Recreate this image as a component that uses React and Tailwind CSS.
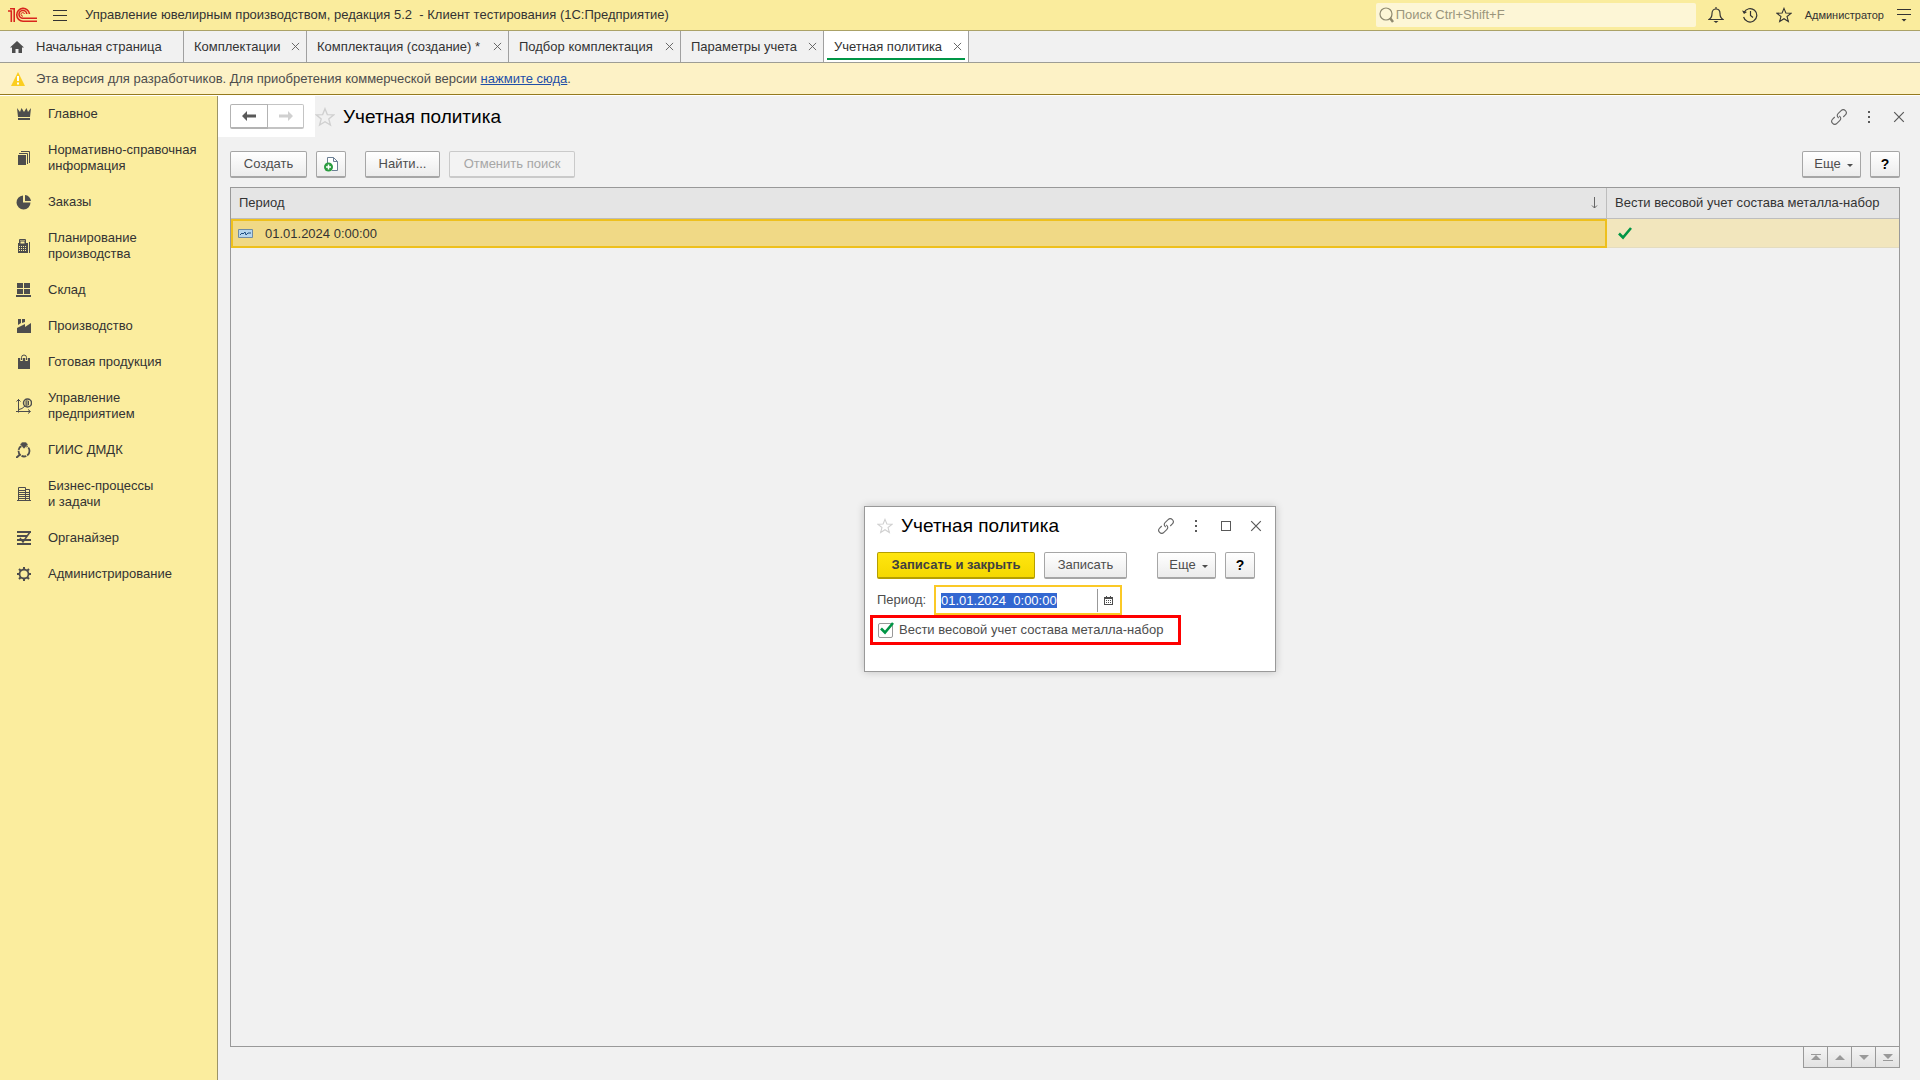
import { useEffect, useRef, useState } from 'react';

const tabs = [
    { title: 'Комплектации', width: 'min-w-[123px]' },
    { title: 'Комплектация (создание) *', width: 'min-w-[202px]' },
    { title: 'Подбор комплектация', width: 'min-w-[172px]' },
    { title: 'Параметры учета', width: 'min-w-[143px]' },
    { title: 'Учетная политика', width: 'min-w-[145px]', active: true },
];

const sections = [
    { title: 'Главное', icon: 'crown' },
    { title: 'Нормативно-справочная информация', icon: 'books' },
    { title: 'Заказы', icon: 'pie' },
    { title: 'Планирование производства', icon: 'calc' },
    { title: 'Склад', icon: 'boxes' },
    { title: 'Производство', icon: 'factory' },
    { title: 'Готовая продукция', icon: 'bag' },
    { title: 'Управление предприятием', icon: 'graph' },
    { title: 'ГИИС ДМДК', icon: 'ring' },
    { title: 'Бизнес-процессы и\u00a0задачи', icon: 'building' },
    { title: 'Органайзер', icon: 'organizer' },
    { title: 'Администрирование', icon: 'gear' },
];

const sectionIcons = {
    crown: (
        <g fill="currentColor">
            <path d="M1 2l3 4 1.500-4L8 6l2.500-4L12 6l3-4-1 9H2z" />
            <path d="M2 12h12v2H2z" />
        </g>
    ),
    books: (
        <g>
            <path d="M2 5h8v10H2z" fill="currentColor" />
            <path d="M3 3.500h8.500V14M5 1.500h8.500V13" fill="none" stroke="currentColor" />
        </g>
    ),
    pie: (
        <g fill="currentColor">
            <path d="M7 1.500V8.500H14.500A7 7 0 1 1 7 1.500z" />
            <path d="M9 1a6.500 6.500 0 0 1 6 6H9z" />
        </g>
    ),
    calc: (
        <g>
            <path d="M2 5h10v10H2z" fill="currentColor" />
            <path d="M3.500 5V1.500h6V5M13.500 4v11" fill="none" stroke="currentColor" />
            <path d="M4 3h5v3H4z" fill="#fbed9e" stroke="currentColor" />
            <path d="M3 8.500h8M3 10.500h8M3 12.500h8" stroke="#fbed9e" strokeDasharray="1 1" />
        </g>
    ),
    boxes: <path d="M1 1h6v5H1zM8 1h6v5H8zM1 7h6v5H1zM8 7h6v5H8zM0 13h15v2H0z" fill="currentColor" />,
    factory: <path d="M1 15V10l8-4v3l6-4v10zM2 1h3v4l-3 2zM6 1h3v3L6 5z" fill="currentColor" />,
    bag: (
        <g>
            <path d="M2 4h12v11H2z" fill="currentColor" />
            <path d="M5.500 7V3.500a2.500 2.500 0 0 1 5 0V7" fill="none" stroke="#fbed9e" strokeWidth="2.500" />
            <path d="M5.500 6V3.500a2.500 2.500 0 0 1 5 0V6" fill="none" stroke="currentColor" />
        </g>
    ),
    graph: (
        <g fill="none" stroke="currentColor">
            <path d="M2.500 1v13.500M0 13.500h14M.5 3.500l2-2 2 2M12 11.500l2.500 2-2.500 2M3 11.500l3-1 3-2.500" />
            <circle cx="11.500" cy="5" r="4" strokeWidth="1.500" />
            <path d="M10 3h2.500v2H10M12.500 5v2H10M10 2.500V8" />
        </g>
    ),
    ring: (
        <g fill="none" stroke="currentColor">
            <circle cx="8" cy="9" r="5.500" strokeWidth="1.800" strokeDasharray="5 1" />
            <path d="M4 12.500L0 16" strokeWidth="2" />
            <path d="M6 0h4l2 2.500L8 7 4 2.500z" fill="currentColor" stroke="#fbed9e" strokeWidth=".6" />
        </g>
    ),
    building: (
        <g fill="none" stroke="currentColor">
            <path d="M2.500 15V1.500h7V15M10 3.500h3.500V15M1 14.500h14" />
            <path d="M3 4.500h6M3 6.500h10M3 8.500h10M3 10.500h10M3 12.500h10" />
        </g>
    ),
    organizer: (
        <g fill="none" stroke="currentColor" strokeWidth="2">
            <path d="M1 2h14M1 6h10M1 10h14M1 14h14" />
            <path d="M4 8l3 4 7-10" strokeWidth="1.500" />
        </g>
    ),
    gear: (
        <g fill="none" stroke="currentColor">
            <circle cx="8" cy="8" r="4.500" strokeWidth="1.800" />
            <path
                d="M8 1v2.500M8 12.500V15M1 8h2.500M12.500 8H15M3 3l2 2M11 11l2 2M3 13l2-2M11 5l2-2"
                strokeWidth="2"
            />
        </g>
    ),
};

const buttonLook = 'h-[27px] rounded-[2px] border border-b-2 border-[#a6a6a6] bg-linear-to-b from-white to-[#ececec] text-[#4d4d4d]';

function Logo() {
    return (
        <svg width="30" height="16" viewBox="0 0 30 16" fill="none" stroke="#d9251d" strokeWidth="1.600" aria-label="1С">
            <path d="M0 4h3.300V15M2 1.800h4.200V15" />
            <path d="M21.500 7A6.400 6.400 0 1 0 15 14.200H29" />
            <path d="M18.800 7A3.900 3.900 0 1 0 15 11.300H29" />
            <path d="M16.500 7a1.800 1.800 0 1 0-1.500 2.200" strokeWidth="1" />
        </svg>
    );
}

function Cross({ size }) {
    return (
        <svg width={size} height={size} viewBox="0 0 10 10" stroke="#595959" strokeWidth="1" fill="none">
            <path d="M1 1l8 8M9 1l-8 8" />
        </svg>
    );
}

function Star({ size, color }) {
    return (
        <svg width={size} height={size} viewBox="0 0 18 18" fill="none" stroke={color} strokeWidth="1.200">
            <path d="M9 1.500l2.100 5.300 5.700.3-4.400 3.600 1.500 5.600L9 13.200l-4.900 3.100 1.500-5.600L1.200 7.100l5.700-.3z" />
        </svg>
    );
}

function LinkIcon() {
    return (
        <svg width="16" height="16" viewBox="0 0 16 16" fill="none" stroke="#666" strokeWidth="1.100">
            <g transform="rotate(-45 8 8)">
                <path d="M7 8.500V8a3 3 0 0 1 3-3h4a3 3 0 0 1 0 6h-3" />
                <path d="M9 7.500V8a3 3 0 0 1-3 3H2a3 3 0 0 1 0-6h3" />
            </g>
        </svg>
    );
}

function Dots() {
    return (
        <svg width="4" height="12" viewBox="0 0 4 12" fill="#595959">
            <path d="M1 0h2v2H1zM1 5h2v2H1zM1 10h2v2H1z" />
        </svg>
    );
}

function CheckMark({ className }) {
    return (
        <svg width="14" height="13" viewBox="0 0 14 13" fill="none" stroke="#009646" strokeWidth="2.600" className={className}>
            <path d="M1 6.500l4 4L13 1" />
        </svg>
    );
}

function WindowButton({ label, children }) {
    return (
        <button aria-label={label} className="flex h-6 w-[30px] items-center justify-center">
            {children}
        </button>
    );
}

function MoreButton() {
    return (
        <button className={`${buttonLook} flex w-[59px] items-center justify-center gap-[6px] pl-1`}>
            Еще
            <svg width="6" height="4" viewBox="0 0 6 4" fill="#4d4d4d" className="mt-1">
                <path d="M0 0h6L3 3z" />
            </svg>
        </button>
    );
}

function HelpButton() {
    return <button className={`${buttonLook} w-[30px] text-sm font-bold text-black`}>?</button>;
}

function TopBar() {
    return (
        <header className="flex h-[31px] items-center border-b border-[#aba267] bg-[#faec9d] pl-2 pr-[9px]">
            <Logo />
            <button className="ml-[15px]" aria-label="Меню">
                <svg width="14" height="11" viewBox="0 0 14 11" stroke="#333">
                    <path d="M0 .5h14M0 5.500h14M0 10.500h14" />
                </svg>
            </button>
            <h1 className="ml-[18px] flex-1 whitespace-pre">
                Управление ювелирным производством, редакция 5.2  - Клиент тестирования (1С:Предприятие)
            </h1>
            <label className="flex h-6 w-[320px] items-center gap-[2px] rounded-[2px] bg-[#fdf6d6] pl-[3px]">
                <svg width="15" height="16" viewBox="0 0 15 16" fill="none" stroke="#8f8a70" strokeWidth="1.200">
                    <circle cx="7" cy="7" r="6" />
                    <path d="M11 11l3 4" strokeWidth="2.500" />
                </svg>
                <input
                    type="search"
                    aria-label="Поиск"
                    placeholder="Поиск Ctrl+Shift+F"
                    className="h-6 min-w-0 flex-1 bg-transparent pb-[2px] outline-none placeholder:text-[#9a957c]"
                />
            </label>
            <div className="ml-[12px] flex items-center gap-[18px]">
                <button aria-label="Уведомления">
                    <svg width="16" height="16" viewBox="0 0 16 16" fill="none" stroke="#333" strokeWidth="1.200">
                        <path d="M1 12.500c2.500-1.500 3-3 3-6C4 3.500 5.800 2 8 2s4 1.500 4 4.500c0 3 .5 4.500 3 6zM8 0v2" />
                        <path d="M5.500 14h5L8 16z" fill="#333" stroke="none" />
                    </svg>
                </button>
                <button aria-label="История">
                    <svg width="16" height="16" viewBox="0 0 16 16" fill="none" stroke="#333" strokeWidth="1.200">
                        <path d="M2 5.500a6.700 6.700 0 1 1-.4 4.500M8.500 4v4.500l2.500 2" />
                        <path d="M0 3.500l2 3.500 3-2z" fill="#333" stroke="none" />
                    </svg>
                </button>
                <button aria-label="Избранное">
                    <Star size={16} color="#333" />
                </button>
            </div>
            <a href="#user" className="ml-[13px] text-[11px]">Администратор</a>
            <button className="ml-[13px]" aria-label="Сервис">
                <svg width="14" height="14" viewBox="0 0 14 14" stroke="#333">
                    <path d="M0 1.500h14M0 6.500h14" />
                    <path d="M4.500 11h5L7 13.500z" fill="#333" stroke="none" />
                </svg>
            </button>
        </header>
    );
}

function TabBar() {
    return (
        <nav className="flex h-8 border-b border-[#9d9d95] bg-[#f1f1f1]">
            <a href="#home" className="flex w-[184px] items-center gap-3 border-r border-[#a0a0a0] pl-[10px]">
                <svg width="14" height="12" viewBox="0 0 14 12" fill="#4d4d4d">
                    <path d="M7 0l7 6.500h-2V12H8.500V8h-3v4H2V6.500H0z" />
                </svg>
                Начальная страница
            </a>
            {tabs.map((tab) => (
                <div
                    key={tab.title}
                    className={`relative flex items-center justify-between border-r border-[#a0a0a0] pl-[10px] pr-[6px] ${tab.width} ${tab.active ? 'bg-white' : ''}`}
                >
                    <a href="#tab">{tab.title}</a>
                    <button aria-label="Закрыть">
                        <Cross size={9} />
                    </button>
                    {tab.active && <span className="absolute inset-x-[3px] bottom-[2px] h-[2px] bg-[#009646]" />}
                </div>
            ))}
        </nav>
    );
}

function Notice() {
    return (
        <div className="flex h-8 items-center gap-[11px] border-b border-[#957a1e] bg-[#fdf2c6] pl-[11px] text-[#4d4d4d]">
            <svg width="14" height="14" viewBox="0 0 14 14">
                <path d="M7 0l7 14H0z" fill="#fbce20" />
                <path d="M6 4h2v5H6zM6 10.500h2v2H6z" fill="#fff" />
            </svg>
            <p>
                Эта версия для разработчиков. Для приобретения коммерческой версии{' '}
                <a href="#buy" className="text-[#1f4fa8] underline">нажмите сюда</a>.
            </p>
        </div>
    );
}

function Sidebar() {
    return (
        <nav className="w-[218px] shrink-0 border-r border-[#9c9466] bg-[#fbed9e]">
            {sections.map((section) => (
                <a key={section.title} href="#section" className="flex items-center gap-4 py-[10px] pl-4 pr-2 leading-4">
                    <svg width="16" height="16" viewBox="0 0 16 16" className="shrink-0 text-[#4d4d4d]">
                        {sectionIcons[section.icon]}
                    </svg>
                    <span className="w-[156px]">{section.title}</span>
                </a>
            ))}
        </nav>
    );
}

function PolicyTable() {
    return (
        <div className="flex-1 border border-[#999] bg-[#f1f1f1]">
            <table className="w-full table-fixed border-separate border-spacing-0 text-left">
                <thead>
                    <tr className="h-[31px] bg-[#e5e5e5]">
                        <th className="border-b border-r border-[#bdbdbd] px-2 font-normal">
                            <div className="flex items-center justify-between">
                                Период
                                <svg width="7" height="12" viewBox="0 0 7 12" fill="none" stroke="#666">
                                    <path d="M3.500 0v11M1 8.500L3.500 11 6 8.500" />
                                </svg>
                            </div>
                        </th>
                        <th className="w-[292px] border-b border-[#bdbdbd] pl-2 font-normal whitespace-nowrap">
                            Вести весовой учет состава металла-набор
                        </th>
                    </tr>
                </thead>
                <tbody>
                    <tr className="h-[29px]">
                        <td className="border-2 border-[#eec01d] bg-[#f0d986] px-[5px]">
                            <div className="flex items-center gap-3">
                                <svg width="15" height="9" viewBox="0 0 15 9" fill="none">
                                    <path d="M.5.5h14v8H.5z" fill="#b5d5ee" stroke="#6f8ba3" />
                                    <path d="M2 6l2-2 1 1 2-2 1 3 2-2h3" stroke="#1f4f82" />
                                </svg>
                                01.01.2024 0:00:00
                            </div>
                        </td>
                        <td className="border-b border-[#e4dcc0] bg-[#f2e6bd] pl-[11px]">
                            <CheckMark />
                        </td>
                    </tr>
                </tbody>
            </table>
        </div>
    );
}

function ScrollButtons() {
    const arrows = [
        { label: 'В начало', d: 'M0 6L5 1l5 5zM0 0h10v1H0z' },
        { label: 'Вверх', d: 'M0 6L5 1l5 5z' },
        { label: 'Вниз', d: 'M0 1h10L5 6z' },
        { label: 'В конец', d: 'M0 0h10L5 5zM0 6h10v1H0z' },
    ];

    return (
        <div className="flex justify-end">
            <div className="flex border-l border-[#999]">
                {arrows.map((arrow) => (
                    <button
                        key={arrow.label}
                        aria-label={arrow.label}
                        className="flex h-[21px] w-6 items-center justify-center border-b border-r border-[#999] bg-linear-to-b from-[#f4f4f4] to-[#e2e2e2]"
                    >
                        <svg width="10" height="7" viewBox="0 0 10 7" fill="#999">
                            <path d={arrow.d} />
                        </svg>
                    </button>
                ))}
            </div>
        </div>
    );
}

function PolicyDialog() {
    const [period, setPeriod] = useState('01.01.2024  0:00:00');
    const [byWeight, setByWeight] = useState(true);
    const periodRef = useRef(null);

    useEffect(() => {
        periodRef.current.focus();
        periodRef.current.select();
    }, []);

    return (
        <section
            role="dialog"
            aria-label="Учетная политика"
            className="pointer-events-auto h-[166px] w-[412px] border border-[#999] bg-white text-[#4d4d4d] shadow-[0_0_8px_rgba(0,0,0,0.2)]"
        >
            <div className="flex h-[38px] items-center pl-3 pr-1">
                <Star size={16} color="#d0d0d0" />
                <h2 className="ml-2 flex-1 text-[19px] text-black">Учетная политика</h2>
                <div className="flex items-center">
                    <WindowButton label="Ссылка"><LinkIcon /></WindowButton>
                    <WindowButton label="Действия"><Dots /></WindowButton>
                    <WindowButton label="Развернуть">
                        <span className="h-[10px] w-[10px] border border-[#595959]" />
                    </WindowButton>
                    <WindowButton label="Закрыть"><Cross size={12} /></WindowButton>
                </div>
            </div>
            <div className="mt-[7px] flex pl-3 pr-5">
                <button className="h-[27px] w-[158px] rounded-[2px] border border-b-2 border-[#b59f00] bg-linear-to-b from-[#ffe60f] to-[#f5d800] font-bold text-[#404040]">
                    Записать и закрыть
                </button>
                <button className={`${buttonLook} ml-[9px] w-[83px]`}>Записать</button>
                <div className="ml-auto flex gap-[9px]">
                    <MoreButton />
                    <HelpButton />
                </div>
            </div>
            <div className="mt-[6px] flex items-center pl-3">
                <label htmlFor="period" className="w-[57px]">Период:</label>
                <div className="flex h-[30px] w-[188px] items-center border-2 border-[#fbc926] bg-white">
                    <input
                        id="period"
                        ref={periodRef}
                        value={period}
                        onChange={(e) => setPeriod(e.target.value)}
                        className="h-[15px] min-w-0 flex-1 pl-[5px] leading-[15px] outline-none selection:bg-[#3367d1] selection:text-white"
                    />
                    <button aria-label="Календарь" className="flex h-[23px] w-[23px] items-center justify-center border-l border-[#999] pr-[2px]">
                        <svg width="9" height="9" viewBox="0 0 9 9">
                            <path d="M0 1h9v8H0z" fill="#4d4d4d" />
                            <path d="M1 3h7v5H1z" fill="#fff" />
                            <path d="M2 4.500h6M2 6.500h6" stroke="#4d4d4d" strokeDasharray="1 1" />
                            <path d="M2 0h1v1H2zM6 0h1v1H6z" fill="#4d4d4d" />
                        </svg>
                    </button>
                </div>
            </div>
            <label className="ml-[5px] flex h-[30px] w-[311px] items-center gap-[6px] border-3 border-[#fe0000] pl-[5px] whitespace-nowrap">
                <span className="relative h-[15px] w-[15px] shrink-0">
                    <input
                        type="checkbox"
                        checked={byWeight}
                        onChange={(e) => setByWeight(e.target.checked)}
                        className="block h-[15px] w-[15px] appearance-none rounded-[2px] border border-[#999] bg-white"
                    />
                    {byWeight && <CheckMark className="pointer-events-none absolute -top-px left-[2px]" />}
                </span>
                Вести весовой учет состава металла-набор
            </label>
        </section>
    );
}

export default function App() {
    return (
        <div className="flex min-h-screen flex-col bg-[#f1f1f1] font-['Liberation_Sans',Arial,sans-serif] text-[13px] leading-4 text-[#333]">
            <TopBar />
            <TabBar />
            <Notice />
            <div className="flex flex-1 border-t border-white">
                <Sidebar />
                <main className="relative flex min-w-0 flex-1 flex-col">
                    <div className="flex h-[41px] items-center pr-[6px]">
                        <div className="flex h-[41px] w-[97px] items-center bg-white pl-3">
                            <button aria-label="Назад" className="flex h-[25px] w-[38px] items-center justify-center rounded-l-[2px] border border-b-2 border-[#b3b3b3] bg-white">
                                <svg width="14" height="10" viewBox="0 0 14 10" fill="#595959">
                                    <path d="M0 5l5-5v3.500h9v3H5V10z" />
                                </svg>
                            </button>
                            <button aria-label="Вперед" disabled className="flex h-[25px] w-9 items-center justify-center rounded-r-[2px] border border-b-2 border-l-0 border-[#c4c4c4] bg-white">
                                <svg width="14" height="10" viewBox="0 0 14 10" fill="#d0d0d0">
                                    <path d="M14 5L9 0v3.500H0v3h9V10z" />
                                </svg>
                            </button>
                        </div>
                        <Star size={20} color="#d0d0d0" />
                        <h2 className="ml-2 flex-1 text-[19px] text-black">Учетная политика</h2>
                        <div className="flex items-center">
                            <WindowButton label="Ссылка"><LinkIcon /></WindowButton>
                            <WindowButton label="Действия"><Dots /></WindowButton>
                            <WindowButton label="Закрыть"><Cross size={12} /></WindowButton>
                        </div>
                    </div>
                    <div className="flex flex-1 flex-col px-3 pr-5 pb-3">
                        <div className="mt-[14px] mb-[9px] flex">
                            <button className={`${buttonLook} w-[77px]`}>Создать</button>
                            <button aria-label="Скопировать" className={`${buttonLook} ml-[9px] flex w-[30px] items-center justify-center`}>
                                <svg width="15" height="16" viewBox="0 0 15 16" fill="none">
                                    <path d="M3.500 9V1.500h6l4 4v9H8M9.500 1.500v4h4" stroke="#6b7f94" fill="#fff" />
                                    <circle cx="4.500" cy="11" r="4.500" fill="#2a9c3f" />
                                    <path d="M4.500 8.500v5M2 11h5" stroke="#fff" strokeWidth="1.500" />
                                </svg>
                            </button>
                            <button className={`${buttonLook} ml-[19px] w-[75px]`}>Найти...</button>
                            <button disabled className="ml-[9px] h-[27px] w-[126px] rounded-[2px] border border-b-2 border-[#cacaca] bg-[#f3f3f3] text-[#a6a6a6]">
                                Отменить поиск
                            </button>
                            <div className="ml-auto flex gap-[9px]">
                                <MoreButton />
                                <HelpButton />
                            </div>
                        </div>
                        <PolicyTable />
                        <ScrollButtons />
                    </div>
                    <div className="pointer-events-none absolute inset-0 flex items-center justify-center pt-[2px] pl-[2px]">
                        <PolicyDialog />
                    </div>
                </main>
            </div>
        </div>
    );
}
